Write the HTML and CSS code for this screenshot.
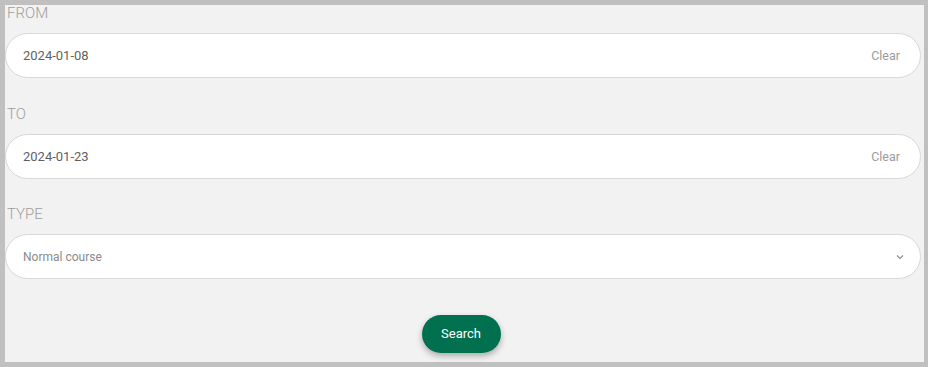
FILE: index.html
```html
<!DOCTYPE html>
<html lang="en">
<head>
  <meta charset="UTF-8">
  <meta name="viewport" content="width=device-width, initial-scale=1.0">
  <title>Search</title>
  <link rel="stylesheet" href="styles.css">
</head>
<body>
  <div class="panel">
    <div class="field">
      <label class="label">FROM</label>
      <div class="input">
        <span class="value">2024-01-08</span>
        <span class="clear">Clear</span>
      </div>
    </div>
    <div class="field">
      <label class="label">TO</label>
      <div class="input">
        <span class="value">2024-01-23</span>
        <span class="clear">Clear</span>
      </div>
    </div>
    <div class="field">
      <label class="label">TYPE</label>
      <div class="input select">
        <span class="value muted">Normal course</span>
        <svg class="chevron" width="8" height="6" viewBox="0 0 8 6"><path d="M1 1.5 L4 4.5 L7 1.5" fill="none" stroke="#8a8a8a" stroke-width="1.1"/></svg>
      </div>
    </div>
    <div class="actions">
      <button class="search">Search</button>
    </div>
  </div>
</body>
</html>
```
FILE: styles.css
```css
html, body {
  margin: 0;
  height: 100%;
}
body {
  background: #c0c0c0;
  font-family: Roboto, "Liberation Sans", Arial, sans-serif;
  padding: 5px 4px 5px 5px;
  box-sizing: border-box;
}
.panel {
  background: #f2f2f2;
  height: 100%;
  padding-right: 3px;
  box-sizing: border-box;
}
.field {
  display: flex;
  flex-direction: column;
  margin-bottom: 27.5px;
}
.label {
  font-size: 15px;
  line-height: 16px;
  font-weight: 300;
  color: #9d9d9d;
  padding-left: 2px;
  margin-bottom: 12px;
}
.input {
  height: 45px;
  box-sizing: border-box;
  background: #fff;
  border: 1px solid #d8d8d8;
  border-radius: 23px;
  display: flex;
  align-items: center;
  justify-content: space-between;
  padding: 0 20px 0 17px;
}
.value {
  font-size: 13px;
  color: #5f5f5f;
}
.value.muted {
  font-size: 12px;
  color: #8a8a8a;
}
.clear {
  font-size: 12.5px;
  color: #9a9a9a;
}
.select {
  padding-right: 16px;
}
.chevron {
  display: block;
}
.actions {
  display: flex;
  justify-content: center;
  padding-top: 8px;
  padding-right: 4px;
}
.search {
  width: 79px;
  height: 38px;
  border: none;
  border-radius: 19px;
  background: #00704f;
  color: #fff;
  font-family: Roboto, "Liberation Sans", Arial, sans-serif;
  font-size: 13px;
  font-weight: 400;
  box-shadow: 0 3px 6px rgba(0, 0, 0, 0.3);
  cursor: pointer;
}
```
